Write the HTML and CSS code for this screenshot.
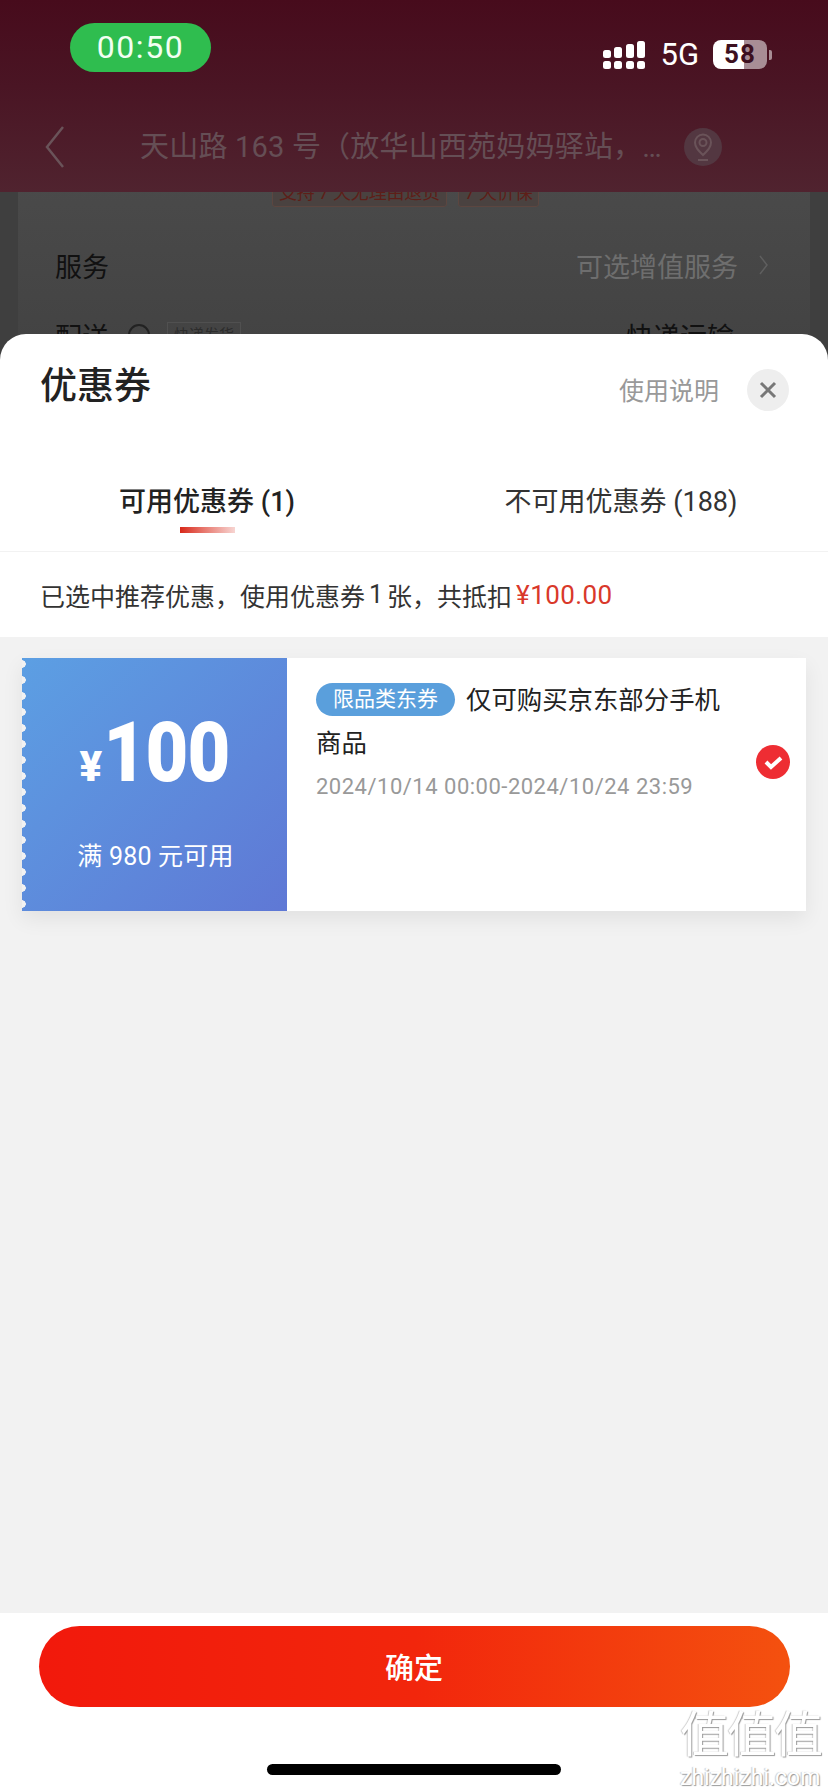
FILE: index.html
```html
<!DOCTYPE html>
<html lang="zh-CN">
<head>
<meta charset="utf-8">
<title>优惠券</title>
<link rel="stylesheet" href="styles.css">
</head>
<body>
<div class="phone">
  <header class="topbar">
    <div class="status">
      <div class="clock">00:50</div>
      <div class="indicators">
        <svg class="signal" width="42" height="28" viewBox="0 0 42 28" fill="#fff">
          <rect x="0" y="9" width="8" height="8" rx="2.500"/><rect x="0" y="20" width="8" height="8" rx="2.500"/>
          <rect x="11" y="6" width="8" height="11" rx="2.500"/><rect x="11" y="20" width="8" height="8" rx="2.500"/>
          <rect x="23" y="3" width="8" height="14" rx="2.500"/><rect x="23" y="20" width="8" height="8" rx="2.500"/>
          <rect x="34" y="0" width="8" height="17" rx="2.500"/><rect x="34" y="20" width="8" height="8" rx="2.500"/>
        </svg>
        <span class="network">5G</span>
        <div class="battery">58</div>
      </div>
    </div>
    <nav class="navrow">
      <svg class="back" width="20" height="42" viewBox="0 0 20 42" fill="none" stroke="#6a5359" stroke-width="2.500"><path d="M18 1 2 21l16 20"/></svg>
      <div class="address">天山路 163 号（放华山西苑妈妈驿站，…</div>
      <div class="locate">
        <svg width="22" height="30" viewBox="0 0 22 30" fill="none" stroke="#6a5359" stroke-width="2"><path d="M11 23C6 18 3 15 3 10.500a8 8 0 0 1 16 0C19 15 16 18 11 23Z"/><circle cx="11" cy="10.500" r="3.500"/><path d="M6 28h10"/></svg>
      </div>
    </nav>
  </header>

  <main class="product">
    <div class="guarantees">
      <span class="guarantee">支持 7 天无理由退货</span>
      <span class="guarantee">7 天价保</span>
    </div>
    <div class="row">
      <span class="row-label">服务</span>
      <span class="row-value">可选增值服务<svg class="row-arrow" width="9" height="20" viewBox="0 0 9 20" fill="none" stroke="#5f5f5f" stroke-width="1.500"><path d="m1 1 7 9-7 9"/></svg></span>
    </div>
    <div class="row row-delivery">
      <span class="row-label">配送</span>
      <span class="help"></span>
      <span class="delivery-tag">快递发货</span>
      <span class="row-value delivery-value">快递运输</span>
    </div>
  </main>

  <section class="sheet">
    <div class="sheet-head">
      <h1 class="sheet-title">优惠券</h1>
      <div class="sheet-actions">
        <span class="help-link">使用说明</span>
        <div class="close">
          <svg width="18" height="18" viewBox="0 0 18 18" fill="none" stroke="#777" stroke-width="3"><path d="m2 2 14 14M16 2 2 16"/></svg>
        </div>
      </div>
    </div>

    <div class="tabs">
      <div class="tab tab-active">可用优惠券 (1)<i class="tab-line"></i></div>
      <div class="tab">不可用优惠券 (188)</div>
    </div>

    <div class="summary">已选中推荐优惠，使用优惠券<span class="summary-num">1</span>张，共抵扣<span class="price">¥100.00</span></div>

    <div class="list">
      <article class="coupon">
        <div class="coupon-value">
          <div class="amount"><span class="yen">¥</span><span class="figure">100</span></div>
          <div class="threshold">满 980 元可用</div>
        </div>
        <div class="coupon-body">
          <p class="coupon-title"><span class="pill">限品类东券</span>仅可购买京东部分手机商品</p>
          <p class="coupon-date">2024/10/14 00:00-2024/10/24 23:59</p>
        </div>
        <svg class="check" width="34" height="34" viewBox="0 0 34 34"><circle cx="17" cy="17" r="17" fill="#ee2d33"/><path d="m10 17 5 5 10-9" fill="none" stroke="#fff" stroke-width="4"/></svg>
      </article>
    </div>

    <footer class="sheet-foot">
      <button class="confirm">确定</button>
      <div class="home-bar"></div>
    </footer>
  </section>

  <div class="watermark">
    <div class="wm-mark">值值值</div>
    <div class="wm-url">zhizhizhi.com</div>
  </div>
</div>
</body>
</html>
```

FILE: styles.css
```css
* { box-sizing: border-box; }

html, body {
  margin: 0;
  padding: 0;
}

body {
  font-family: Roboto, "Noto Sans CJK SC", sans-serif;
  background: #fff;
}

.phone {
  position: relative;
  width: 828px;
  height: 1792px;
  overflow: hidden;
  background: #3f3f3f;
}

/* Dimmed page behind the sheet */
.topbar {
  position: relative;
  z-index: 1;
  height: 192px;
  background: linear-gradient(180deg, #470b1c 0%, #4a1524 45%, #50232f 100%);
}

.status {
  display: flex;
  justify-content: space-between;
  align-items: flex-start;
  height: 127px;
  padding: 23px 56px 0 70px;
}

.clock {
  width: 141px;
  height: 49px;
  border-radius: 25px;
  background: #2fbd4f;
  color: #f2fff2;
  font-size: 32px;
  line-height: 49px;
  letter-spacing: 1.600px;
  text-align: center;
}

.indicators {
  display: flex;
  align-items: center;
  margin-top: 17px;
}

.network {
  margin-left: 15px;
  color: #fff;
  font-size: 31px;
  line-height: 29px;
}

.battery {
  position: relative;
  width: 54px;
  height: 29px;
  margin: 0 5px 0 14px;
  border-radius: 8px;
  background: linear-gradient(90deg, #fff 57%, #a88d95 57%);
  color: #3d1020;
  font-size: 26px;
  font-weight: 700;
  letter-spacing: 1px;
  line-height: 29px;
  text-align: center;
}

.battery::after {
  content: "";
  position: absolute;
  top: 10px;
  right: -5px;
  width: 3px;
  height: 10px;
  border-radius: 0 2px 2px 0;
  background: #a88d95;
}

.navrow {
  display: flex;
  align-items: center;
  height: 40px;
  padding-left: 45px;
}

.back { flex: none; }

.address {
  width: 530px;
  margin-left: 75px;
  color: #654e55;
  font-size: 29px;
  letter-spacing: 0.200px;
  line-height: 40px;
  white-space: nowrap;
}

.locate {
  display: flex;
  align-items: center;
  justify-content: center;
  width: 38px;
  height: 38px;
  margin-left: 14px;
  border-radius: 50%;
  background: #533741;
}

.product {
  margin: 0 18px;
  height: 160px;
  background: linear-gradient(180deg, #4a4a4a, #434343);
}

.guarantees {
  display: flex;
  gap: 11px;
  margin-top: -11px;
  margin-left: 254px;
}

.guarantee {
  height: 26px;
  padding: 0 6px;
  border: 1px solid #5c4640;
  border-radius: 3px;
  background: #4a4240;
  color: #5e1e18;
  font-size: 18px;
  letter-spacing: -0.200px;
  line-height: 22px;
  white-space: nowrap;
}

.row {
  display: flex;
  align-items: center;
  height: 40px;
  margin-top: 38px;
  padding: 0 42px 0 37px;
}

.row-label {
  color: #111;
  font-size: 27px;
}

.row-value {
  display: flex;
  align-items: center;
  margin-left: auto;
  color: #6e6e6e;
  font-size: 27px;
}

.row-arrow { margin-left: 21px; }

.row-delivery { margin-top: 30px; }

.help {
  width: 22px;
  height: 22px;
  margin-left: 19px;
  border: 2px solid #222;
  border-radius: 50%;
}

.delivery-tag {
  height: 26px;
  margin-left: 17px;
  padding: 0 6px;
  border: 1px solid #505050;
  color: #2c2c2c;
  font-size: 15px;
}

.delivery-value {
  margin-right: 34px;
  color: #111;
}

/* Bottom sheet */
.sheet {
  position: absolute;
  z-index: 2;
  top: 334px;
  right: 0;
  bottom: 0;
  left: 0;
  display: flex;
  flex-direction: column;
  border-radius: 26px 26px 0 0;
  background: #fff;
  overflow: hidden;
}

.sheet-head {
  display: flex;
  flex: none;
  align-items: center;
  justify-content: space-between;
  height: 112px;
  padding: 0 39px 0 40px;
}

.sheet-title {
  margin: 0 0 6px;
  color: #222;
  font-size: 37px;
  font-weight: 500;
  line-height: 50px;
}

.sheet-actions {
  display: flex;
  align-items: center;
  gap: 28px;
}

.help-link {
  margin-bottom: 2px;
  color: #999;
  font-size: 25px;
}

.close {
  display: flex;
  align-items: center;
  justify-content: center;
  width: 42px;
  height: 42px;
  border-radius: 50%;
  background: #eee;
}

.tabs {
  display: grid;
  flex: none;
  grid-template-columns: 1fr 1fr;
  height: 106px;
  padding-top: 37px;
  border-bottom: 1px solid #f2f2f2;
}

.tab {
  display: flex;
  flex-direction: column;
  align-items: center;
  color: #333;
  font-size: 27px;
  line-height: 38px;
  white-space: nowrap;
}

.tab-active {
  color: #222;
  font-weight: 500;
}

.tab-line {
  width: 55px;
  height: 6px;
  margin-top: 6px;
  background: linear-gradient(90deg, #d8281a 0%, #e87a70 45%, #f7d5d2 100%);
}

.summary {
  display: flex;
  flex: none;
  align-items: center;
  height: 85px;
  padding: 0 40px;
  color: #333;
  font-size: 25px;
  white-space: nowrap;
}

.summary-num { margin: 0 4px; }

.price {
  margin-left: 4px;
  color: #d9382a;
  font-size: 26px;
  letter-spacing: 0.400px;
}

.list {
  flex: 1;
  padding: 21px 22px 0;
  background: #f2f2f2;
}

.coupon {
  display: flex;
  height: 253px;
  background: #fff;
  box-shadow: 0 8px 20px rgba(0, 0, 0, 0.07);
}

.coupon-value {
  position: relative;
  flex: none;
  width: 265px;
  padding-top: 50px;
  background: linear-gradient(135deg, #5c9fe3 0%, #5f78d5 100%);
  color: #fff;
  text-align: center;
}

.coupon-value::before {
  content: "";
  position: absolute;
  top: 0;
  bottom: 0;
  left: 0;
  width: 5px;
  background: radial-gradient(circle at 0 50%, #f2f2f2 3.500px, transparent 4px) 0 -2px / 5px 16px repeat-y;
}

.amount {
  display: flex;
  align-items: baseline;
  justify-content: center;
  height: 90px;
  padding-right: 0;
  line-height: 90px;
  font-weight: 900;
}

.yen {
  font-size: 42px;
}

.figure {
  display: inline-block;
  margin: 0 -9px 0 -7px;
  font-size: 84px;
  letter-spacing: -1px;
  transform: scaleX(0.88);
}

.threshold {
  margin-top: 41px;
  padding-left: 2px;
  font-size: 25px;
  letter-spacing: 0.200px;
  line-height: 36px;
}

.coupon-body {
  flex: none;
  width: 434px;
  padding: 21px 0 0 29px;
}

.coupon-title {
  margin: 0;
  color: #222;
  font-size: 25.400px;
  line-height: 43px;
}

.pill {
  display: inline-block;
  height: 33px;
  margin-right: 11px;
  padding: 0 17px;
  border-radius: 17px;
  background: #5a9fdc;
  color: #fff;
  font-size: 21px;
  line-height: 33px;
  vertical-align: 3px;
}

.coupon-date {
  margin: 7px 0 0;
  color: #999;
  font-size: 22px;
  letter-spacing: 0.500px;
  line-height: 30px;
  white-space: nowrap;
}

.check {
  flex: none;
  margin: 87px 0 0 35px;
}

.sheet-foot {
  display: flex;
  flex: none;
  flex-direction: column;
  align-items: center;
  height: 179px;
  padding-top: 13px;
  background: #fff;
}

.confirm {
  width: 751px;
  height: 81px;
  padding: 0 0 2px;
  border: 0;
  border-radius: 41px;
  background: linear-gradient(90deg, #f2190c 0%, #f2260c 50%, #f4510f 100%);
  color: #fff;
  font-family: inherit;
  font-size: 29px;
  font-weight: 500;
}

.home-bar {
  width: 294px;
  height: 11px;
  margin-top: 57px;
  border-radius: 6px;
  background: #000;
}

/* Site watermark baked into the screenshot */
.watermark {
  position: absolute;
  z-index: 3;
  top: 1709px;
  left: 680px;
  width: 140px;
  color: #fff;
  text-shadow: 1px 1px 1px #999, -1px 0 1px #ccc;
  text-align: center;
}

.wm-mark {
  font-size: 49px;
  font-weight: 400;
  letter-spacing: -2px;
  line-height: 54px;
  white-space: nowrap;
}

.wm-url {
  margin-top: 2px;
  font-size: 23px;
  line-height: 26px;
  white-space: nowrap;
}
```
